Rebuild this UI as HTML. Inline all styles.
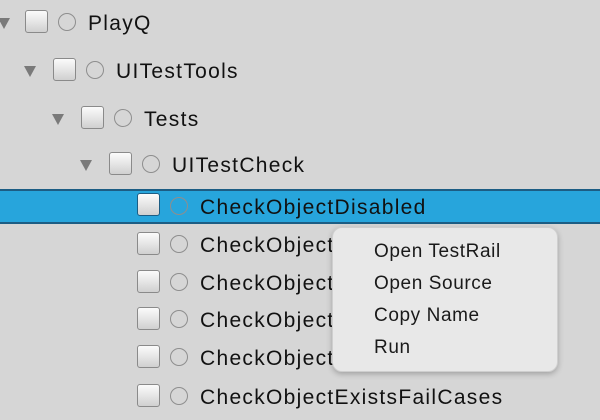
<!DOCTYPE html>
<html><head><style>
body{margin:0;width:600px;height:420px;background:#d6d6d6;position:relative;overflow:hidden;font-family:"Liberation Sans",sans-serif;}
.row{position:absolute;left:0;width:600px;height:36px;}
.tri{position:absolute;width:0;height:0;border-left:6px solid transparent;border-right:6px solid transparent;border-top:11px solid #7a7a7a;top:13px;}
.cb{position:absolute;width:21px;height:21px;border:1px solid #8a8a8a;border-radius:3px;background:linear-gradient(#fbfbfb,#d0d0d0);top:5px;}
.ci{position:absolute;width:16px;height:16px;border:1.5px solid #8e8e8e;border-radius:50%;top:8px;}
.t{position:absolute;font-size:21px;color:#111;top:7px;letter-spacing:1.3px;}
.sel{position:absolute;left:0;top:189px;width:600px;height:31px;background:#27a5dc;border-top:2px solid #1c5d84;border-bottom:2px solid #1c5d84;}
.menu{position:absolute;left:332px;top:227px;width:224px;height:143px;background:#e8e8e8;border-radius:10px;box-shadow:0 2px 6px rgba(0,0,0,0.25);border:1px solid #cfcfcf;}
.mi{position:absolute;left:41px;font-size:19px;color:#1a1a1a;letter-spacing:0.6px;}
</style></head><body>
<div class="sel"></div>
<div class="row" style="top:5px"><div class="tri" style="left:-2px"></div><div class="cb" style="left:25px"></div><div class="ci" style="left:58px"></div><div class="t" style="left:88px">PlayQ</div></div>
<div class="row" style="top:53px"><div class="tri" style="left:24px"></div><div class="cb" style="left:53px"></div><div class="ci" style="left:86px"></div><div class="t" style="left:116px">UITestTools</div></div>
<div class="row" style="top:101px"><div class="tri" style="left:52px"></div><div class="cb" style="left:81px"></div><div class="ci" style="left:114px"></div><div class="t" style="left:144px">Tests</div></div>
<div class="row" style="top:147px"><div class="tri" style="left:80px"></div><div class="cb" style="left:109px"></div><div class="ci" style="left:142px"></div><div class="t" style="left:172px">UITestCheck</div></div>
<div class="row" style="top:189px"><div class="cb" style="left:137px;border-color:#1c5d84;top:4px"></div><div class="ci" style="left:170px"></div><div class="t" style="left:200px">CheckObjectDisabled</div></div>
<div class="row" style="top:227px"><div class="cb" style="left:137px"></div><div class="ci" style="left:170px"></div><div class="t" style="left:200px">CheckObject</div></div>
<div class="row" style="top:265px"><div class="cb" style="left:137px"></div><div class="ci" style="left:170px"></div><div class="t" style="left:200px">CheckObject</div></div>
<div class="row" style="top:302px"><div class="cb" style="left:137px"></div><div class="ci" style="left:170px"></div><div class="t" style="left:200px">CheckObject</div></div>
<div class="row" style="top:340px"><div class="cb" style="left:137px"></div><div class="ci" style="left:170px"></div><div class="t" style="left:200px">CheckObject</div></div>
<div class="row" style="top:379px"><div class="cb" style="left:137px"></div><div class="ci" style="left:170px"></div><div class="t" style="left:200px">CheckObjectExistsFailCases</div></div>
<div class="menu">
<div class="mi" style="top:13px">Open TestRail</div>
<div class="mi" style="top:45px">Open Source</div>
<div class="mi" style="top:77px">Copy Name</div>
<div class="mi" style="top:109px">Run</div>
</div>
</body></html>
